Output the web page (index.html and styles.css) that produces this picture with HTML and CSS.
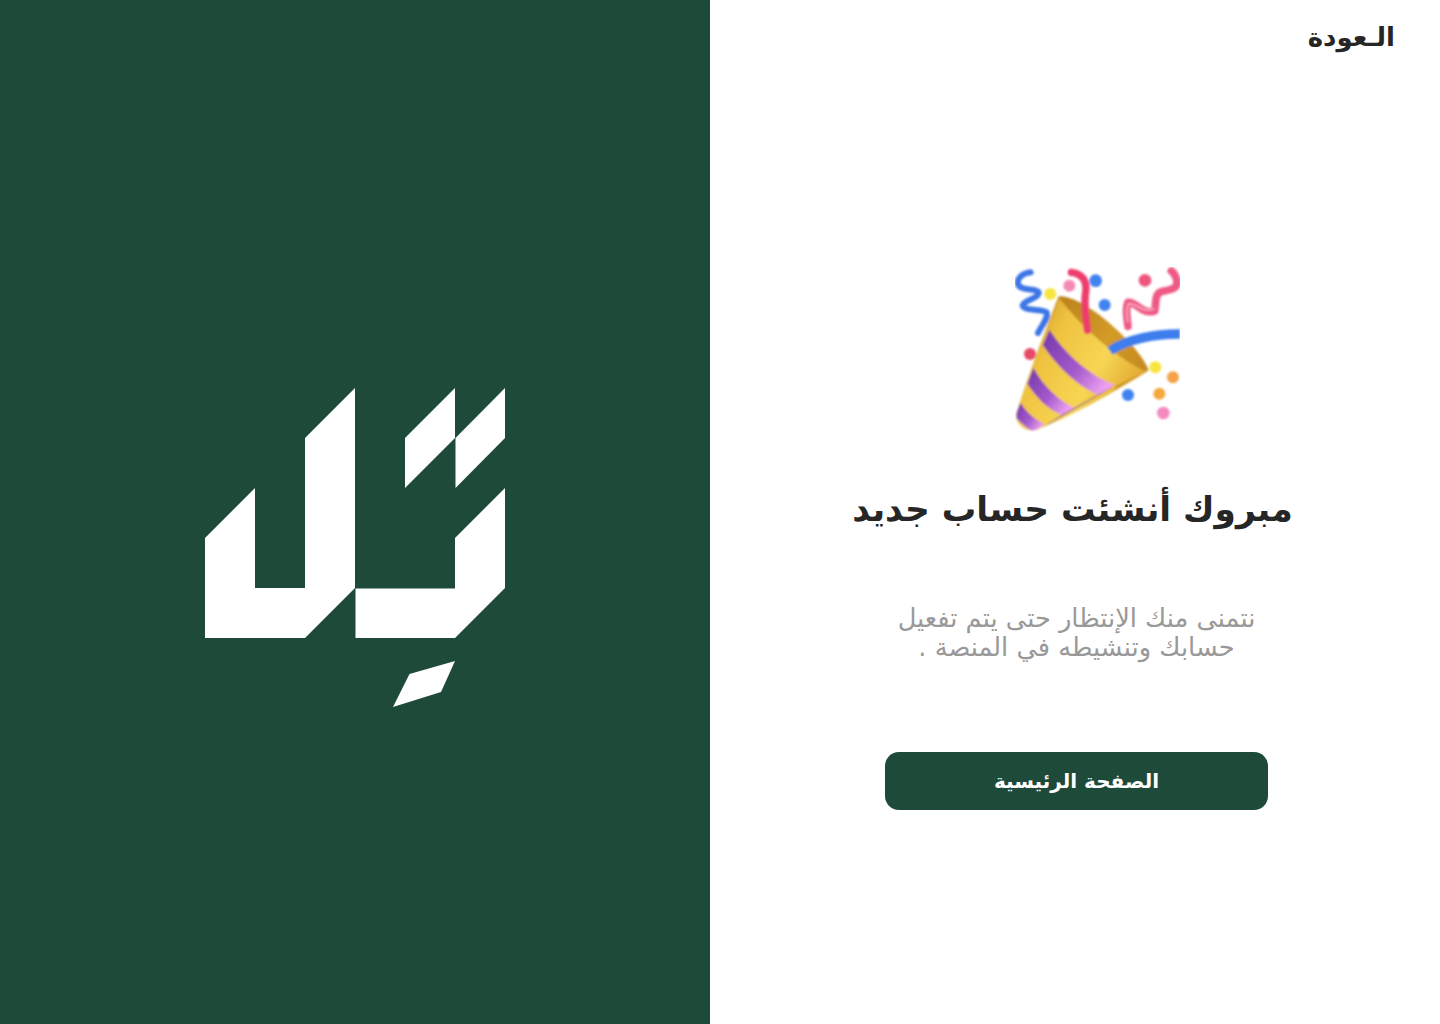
FILE: index.html
```html
<!DOCTYPE html>
<html lang="ar" dir="rtl">
<head>
    <meta charset="UTF-8">
    <meta name="viewport" content="width=device-width, initial-scale=1.0">
    <title>مبروك</title>
    <link rel="stylesheet" href="styles.css">
</head>
<body>

<div class="page">
    <main class="content">
        <header class="top">
            <a class="back" href="#">الـعودة</a>
        </header>

        <div class="message">
            <svg class="party" viewBox="45 24 495 495" width="165" height="165" aria-hidden="true">
                <defs>
                    <filter id="soft"><feGaussianBlur stdDeviation="3"/></filter>
                    <linearGradient id="gold" x1="0" y1="0.1" x2="1" y2="0.7">
                        <stop offset="0" stop-color="#c98a22"/>
                        <stop offset="0.3" stop-color="#efc23f"/>
                        <stop offset="0.65" stop-color="#f7d653"/>
                        <stop offset="1" stop-color="#dc9c28"/>
                    </linearGradient>
                    <linearGradient id="inner" x1="0" y1="0" x2="1" y2="1">
                        <stop offset="0" stop-color="#b07618"/>
                        <stop offset="0.5" stop-color="#d39a28"/>
                        <stop offset="1" stop-color="#b67c1a"/>
                    </linearGradient>
                    <linearGradient id="purple" x1="0" y1="0" x2="1" y2="0.7">
                        <stop offset="0" stop-color="#7436a8"/>
                        <stop offset="0.6" stop-color="#a45acc"/>
                        <stop offset="1" stop-color="#eea0f0"/>
                    </linearGradient>
                    <clipPath id="coneClip">
                        <path d="M176 112 C130 230 85 350 50 462 C44 490 70 516 104 514 C220 470 340 400 446 334 Z"/>
                    </clipPath>
                </defs>
                <g filter="url(#soft)">
                    <path d="M92 40 C62 44 50 62 54 76 C62 98 108 86 116 100 C118 118 70 124 68 140 C74 158 128 148 140 160 C146 178 124 200 114 222" fill="none" stroke="#3c76e6" stroke-width="18" stroke-linecap="round"/>
                    <path d="M384 202 C380 170 376 146 384 130 C410 128 426 168 464 156 C470 132 462 106 484 98 C512 92 538 90 530 62 C526 48 520 40 514 36" fill="none" stroke="#ef5a84" stroke-width="23" stroke-linecap="round" stroke-linejoin="round"/>
                    <path d="M384 190 C380 170 378 146 386 134 C410 132 426 162 462 150" fill="none" stroke="#f8a0b8" stroke-width="6"/>

                    <path d="M176 112 C130 230 85 350 50 462 C44 490 70 516 104 514 C220 470 340 400 446 334 C420 260 250 106 176 112 Z" fill="url(#inner)"/>
                    <path d="M178 118 C130 230 85 350 50 462 C44 490 70 516 104 514 C220 470 340 400 440 338 C350 300 240 200 178 118 Z" fill="url(#gold)"/>
                    <g clip-path="url(#coneClip)">
                        <path d="M148 212 C200 290 270 350 345 378 L296 408 C230 380 170 320 128 258 Z" fill="url(#purple)"/>
                        <path d="M100 326 C130 380 170 420 222 446 L186 468 C140 450 105 410 82 374 Z" fill="url(#purple)"/>
                        <path d="M62 432 C80 462 105 480 134 496 L100 518 C80 508 60 490 44 472 Z" fill="url(#purple)"/>
                        <path d="M186 468 L345 378 L300 406 L120 510 Z" fill="#6f2f9c"/>
                        <path d="M340 394 L446 334 L350 380 Z" fill="#c58a20"/>
                    </g>
                    <path d="M330 276 C380 240 470 224 540 225" fill="none" stroke="#3d7dee" stroke-width="28"/>
                    <path d="M214 40 C248 44 264 68 256 106 C252 140 258 180 262 214" fill="none" stroke="#ee3d6c" stroke-width="22" stroke-linecap="round"/>

                    <circle cx="151" cy="105" r="18" fill="#f8e440"/>
                    <circle cx="208" cy="80" r="18" fill="#f48ab4"/>
                    <circle cx="287" cy="65" r="19" fill="#3f82f0"/>
                    <circle cx="314" cy="138" r="18" fill="#3f82f0"/>
                    <circle cx="435" cy="64" r="19" fill="#f0557f"/>
                    <circle cx="90" cy="285" r="18" fill="#e84a68"/>
                    <circle cx="466" cy="325" r="18" fill="#f8e440"/>
                    <circle cx="519" cy="355" r="18" fill="#f4a24a"/>
                    <circle cx="478" cy="404" r="18" fill="#f4a83c"/>
                    <circle cx="384" cy="408" r="18" fill="#3f82f0"/>
                    <circle cx="490" cy="462" r="19" fill="#f48ac0"/>
                </g>
            </svg>

            <h1 class="title">مبروك أنشئت حساب جديد</h1>
            <p class="note">نتمنى منك الإنتظار حتى يتم تفعيل حسابك وتنشيطه في المنصة .</p>
            <a class="home-btn" href="#">الصفحة الرئيسية</a>
        </div>
    </main>

    <aside class="brand">
        <svg class="logo" viewBox="205 317 300 390" width="300" height="390" aria-hidden="true">
            <path d="M205 538 L255 488 V588 H305 V438 L355 388 V588 L305 638 H205 Z"/>
            <path d="M355.500 638 V588.500 H455 V538 L505 488 V588 L455 638 Z"/>
            <path d="M405 438 L455 388 V438 L405 488 Z"/>
            <path d="M455.500 438 L505 388 V438 L455.500 488 Z"/>
            <path d="M393 707 L409.500 674 L455 661 L441 692 Z"/>
        </svg>
    </aside>
</div>

</body>
</html>
```

FILE: styles.css
```css
* {
    box-sizing: border-box;
}
body {
    margin: 0;
    font-family: "DejaVu Sans", "Noto Sans", sans-serif;
    background-color: #fff;
    color: #262626;
}
.page {
    display: grid;
    grid-template-columns: 730px 710px;
    height: 1024px;
    overflow: hidden;
}
.brand {
    background-color: #1e4a3a;
    display: flex;
    align-items: center;
    justify-content: center;
}
.logo {
    fill: #fff;
}
.content {
    display: flex;
    flex-direction: column;
}
.top {
    padding: 22px 45px 0;
}
.back {
    font-size: 26px;
    font-weight: 700;
    color: #262626;
    text-decoration: none;
}
.message {
    display: flex;
    flex-direction: column;
    align-items: center;
    padding-left: 3px;
    margin-top: 215px;
}
.party {
    margin-left: 42px;
}
.title {
    margin: 52px 8px 0 0;
    font-size: 34.400px;
    line-height: 50px;
    font-weight: 700;
}
.note {
    width: 383px;
    margin: 70px 0 0;
    font-size: 25.700px;
    line-height: 29px;
    color: #999;
    text-align: center;
}
.home-btn {
    display: flex;
    align-items: center;
    justify-content: center;
    width: 383px;
    height: 58px;
    margin-top: 90px;
    border-radius: 14px;
    background-color: #1e4a3a;
    color: #fff;
    font-size: 20px;
    font-weight: 700;
    text-decoration: none;
}
```
